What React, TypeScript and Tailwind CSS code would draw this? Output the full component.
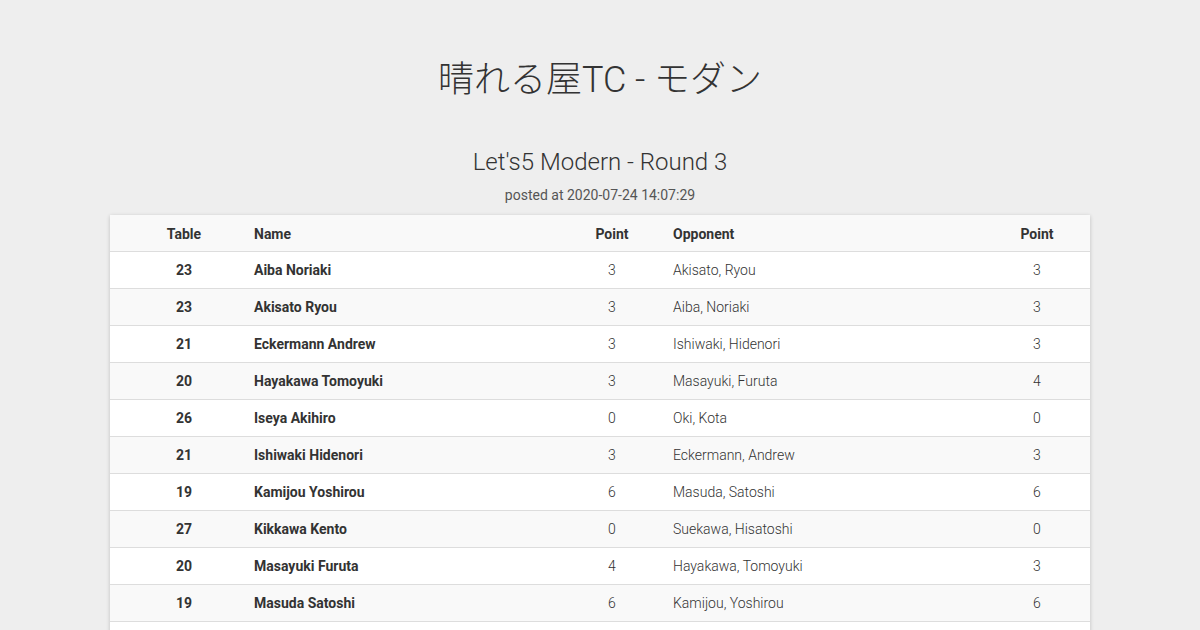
const rows = [
  ['23', 'Aiba Noriaki', '3', 'Akisato, Ryou', '3'],
  ['23', 'Akisato Ryou', '3', 'Aiba, Noriaki', '3'],
  ['21', 'Eckermann Andrew', '3', 'Ishiwaki, Hidenori', '3'],
  ['20', 'Hayakawa Tomoyuki', '3', 'Masayuki, Furuta', '4'],
  ['26', 'Iseya Akihiro', '0', 'Oki, Kota', '0'],
  ['21', 'Ishiwaki Hidenori', '3', 'Eckermann, Andrew', '3'],
  ['19', 'Kamijou Yoshirou', '6', 'Masuda, Satoshi', '6'],
  ['27', 'Kikkawa Kento', '0', 'Suekawa, Hisatoshi', '0'],
  ['20', 'Masayuki Furuta', '4', 'Hayakawa, Tomoyuki', '3'],
  ['19', 'Masuda Satoshi', '6', 'Kamijou, Yoshirou', '6'],
  ['26', 'Oki Kota', '0', 'Iseya, Akihiro', '0'],
]

const grid = 'grid grid-cols-[144px_297px_122px_311px_106px] items-center'

export default function App() {
  return (
    <div
      className="min-h-screen bg-[#eeeeee] text-[#333333] flex flex-col items-center"
      style={{ fontFamily: 'Roboto, "Noto Sans CJK JP", sans-serif' }}
    >
      <h1 className="mt-[56px] text-[36px] leading-[48px] font-light">晴れる屋TC - モダン</h1>
      <h2 className="mt-[42px] text-[24px] leading-[32px] font-light">Let's5 Modern - Round 3</h2>
      <p className="mt-[7px] text-[14px] leading-[20px] text-[#555555]">posted at 2020-07-24 14:07:29</p>
      <div className="mt-[10px] w-[980px] bg-white shadow-[0_1px_4px_rgba(0,0,0,0.2)] text-[14px]">
        <div className={`${grid} h-[37px] pt-[2px] bg-[#f9f9f9] border-b border-[#dddddd] font-bold`}>
          <div className="pl-1 text-center">Table</div>
          <div>Name</div>
          <div className="text-center">Point</div>
          <div>Opponent</div>
          <div className="text-center">Point</div>
        </div>
        {rows.map((r, i) => (
          <div
            key={i}
            className={`${grid} h-[37px] pt-[1px] border-b border-[#dddddd] ${i % 2 === 1 ? 'bg-[#f9f9f9]' : 'bg-white'}`}
          >
            <div className="pl-1 text-center font-bold">{r[0]}</div>
            <div className="font-bold">{r[1]}</div>
            <div className="text-center font-light">{r[2]}</div>
            <div className="font-light">{r[3]}</div>
            <div className="text-center font-light">{r[4]}</div>
          </div>
        ))}
      </div>
    </div>
  )
}
